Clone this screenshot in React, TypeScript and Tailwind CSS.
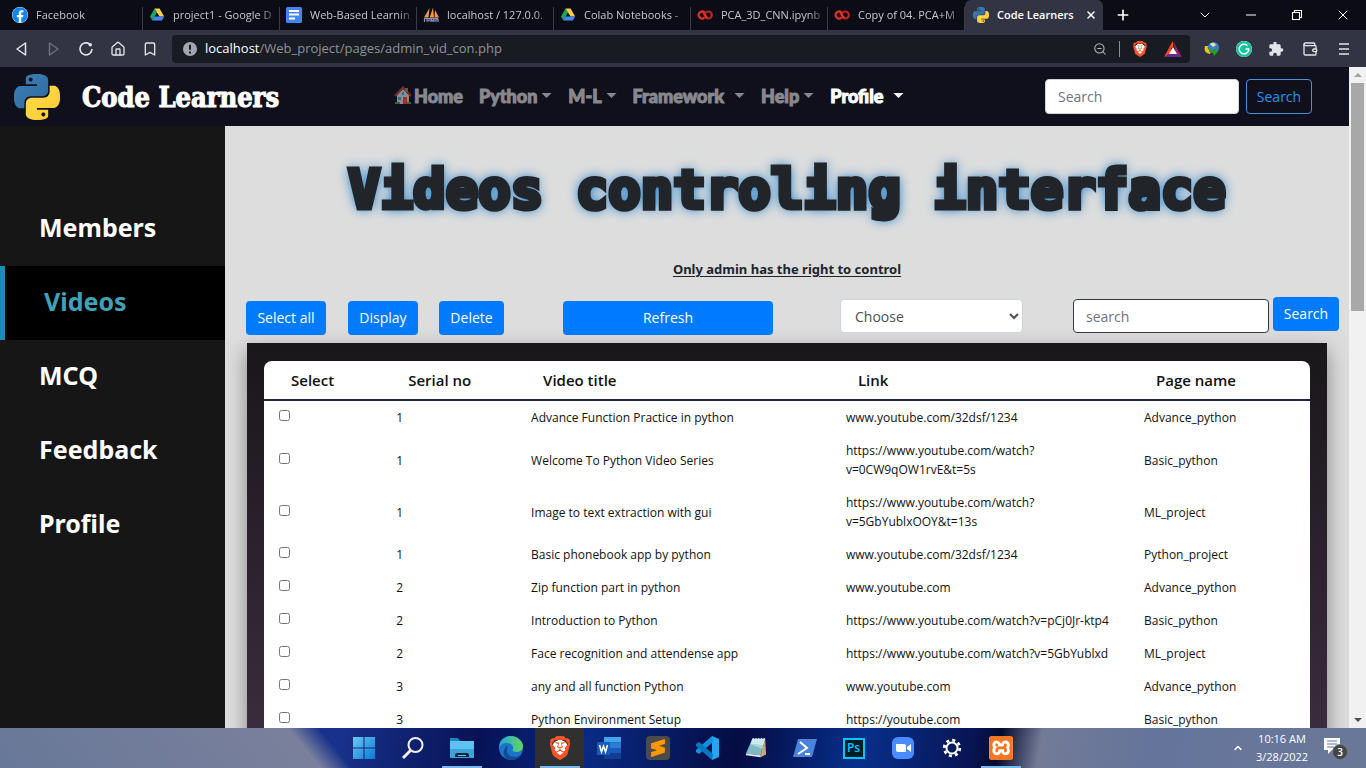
import React from "react";
import { SiBrave, SiXampp, SiSublimetext, SiGrammarly } from "react-icons/si";
import { FaFacebook } from "react-icons/fa";
import { MdExtension } from "react-icons/md";
import { Bookmark, ChevronDown, ChevronUp, House, Minus, Plus, Wallet, X, ZoomOut } from "lucide-react";

const sans = "font-['Open_Sans','Noto_Sans',sans-serif]";

function PythonLogo({ className }: { className: string }) {
  return (
    <svg viewBox="0 0 24 24" className={className} aria-hidden="true">
      <defs>
        <linearGradient id="pyBlue" x1="0" y1="0" x2="1" y2="1">
          <stop offset="0" stopColor="#3c82b8" />
          <stop offset="1" stopColor="#30699b" />
        </linearGradient>
        <linearGradient id="pyYellow" x1="0" y1="0" x2="1" y2="1">
          <stop offset="0" stopColor="#ffdf50" />
          <stop offset="1" stopColor="#ffc72f" />
        </linearGradient>
      </defs>
      <path
        fill="url(#pyBlue)"
        d="M14.25.18l.9.2.73.26.59.3.45.32.34.34.25.34.16.33.1.3.04.26.02.2-.01.13V8.5l-.05.63-.13.55-.21.46-.26.38-.3.31-.33.25-.35.19-.35.14-.33.1-.3.07-.26.04-.21.02H8.77l-.69.05-.59.14-.5.22-.41.27-.33.32-.27.35-.2.36-.15.37-.1.35-.07.32-.04.27-.02.21v3.06H3.17l-.21-.03-.28-.07-.32-.12-.35-.18-.36-.26-.36-.36-.35-.46-.32-.59-.28-.73-.21-.88-.14-1.05-.05-1.23.06-1.22.16-1.04.24-.87.32-.71.36-.57.4-.44.42-.33.42-.24.4-.16.36-.1.32-.05.24-.01h.16l.06.01h8.16v-.83H6.18l-.01-2.75-.02-.37.05-.34.11-.31.17-.28.25-.26.31-.23.38-.2.44-.18.51-.15.58-.12.64-.1.71-.06.77-.04.84-.02 1.27.05zm-6.3 1.98l-.23.33-.08.41.08.41.23.34.33.22.41.09.41-.09.33-.22.23-.34.08-.41-.08-.41-.23-.33-.33-.22-.41-.09-.41.09z"
      />
      <path
        fill="url(#pyYellow)"
        d="M21.04 6.11l.28.06.32.12.35.18.36.27.36.35.35.47.32.59.28.73.21.88.14 1.04.05 1.23-.06 1.23-.16 1.04-.24.86-.32.71-.36.57-.4.45-.42.33-.42.24-.4.16-.36.09-.32.05-.24.02-.16-.01h-8.22v.82h5.84l.01 2.76.02.36-.05.34-.11.31-.17.29-.25.25-.31.24-.38.2-.44.17-.51.15-.58.13-.64.09-.71.07-.77.04-.84.01-1.27-.04-1.07-.14-.9-.2-.73-.25-.59-.3-.45-.33-.34-.34-.25-.34-.16-.33-.1-.3-.04-.25-.02-.2.01-.13v-5.34l.05-.64.13-.54.21-.46.26-.38.3-.32.33-.24.35-.2.35-.14.33-.1.3-.06.26-.04.21-.02.13-.01h5.84l.69-.05.59-.14.5-.21.41-.28.33-.32.27-.35.2-.36.15-.36.1-.35.07-.32.04-.28.02-.21V6.07h2.09l.14.01zm-6.47 14.25l-.23.33-.08.41.08.41.23.33.33.23.41.08.41-.08.33-.23.23-.33.08-.41-.08-.41-.23-.33-.33-.23-.41-.08-.41.08z"
      />
    </svg>
  );
}

function DriveIcon() {
  return (
    <svg viewBox="0 0 16 16" className="size-4 shrink-0" aria-hidden="true">
      <path d="M5.5 1.5 1 9.5l2.3 4L8 5.500z" fill="#1ea362" />
      <path d="M5.500 1.500h5l4.700 8h-4.700z" fill="#ffcf48" />
      <path d="M5.500 9.500h9.700l-2.300 4H3.300z" fill="#4687f4" />
    </svg>
  );
}

function DocsIcon() {
  return (
    <svg viewBox="0 0 16 16" className="size-4 shrink-0" aria-hidden="true">
      <rect width="16" height="16" rx="1.500" fill="#4285f4" />
      <path d="M3 4h10M3 7.500h10M3 11.500h6" stroke="#fff" strokeWidth="1.800" />
    </svg>
  );
}

function SailIcon() {
  return (
    <svg viewBox="0 0 16 16" className="size-4 shrink-0" aria-hidden="true">
      <path d="M1 10.500 6.500 1 5.500 10.500zM6.700 10.500 10 .5l1 10zM11.500 10.500 12 3l4 7.500z" fill="#f09a3c" />
      <path d="M1 11.500h14M1.500 15v-3.500M4 12v2h2v-2M8 15v-3l1.500 2 1.500-2v3M13 15v-3h2v3" fill="none" stroke="#8f93b8" strokeWidth="1.200" />
    </svg>
  );
}

function ColabIcon() {
  return (
    <svg viewBox="0 0 16 16" className="size-4 shrink-0" fill="none" strokeWidth="2.200" aria-hidden="true">
      <path d="M7.500 5.300a3.500 3.500 0 1 0 0 5.400" stroke="#e0332c" />
      <circle cx="11.300" cy="8" r="3.500" stroke="#c4211c" />
      <path d="M6 5l4 6" stroke="#e0332c" />
    </svg>
  );
}

function BraveIcon({ className }: { className: string }) {
  return (
    <span className="flex items-center justify-center bg-[radial-gradient(circle,#fff_45%,transparent_48%)]">
      <SiBrave className={className} />
    </span>
  );
}

const tabs = [
  { icon: <FaFacebook className="size-4 shrink-0 rounded-full bg-white text-[#1185f3]" />, title: "Facebook" },
  { icon: <DriveIcon />, title: "project1 - Google D" },
  { icon: <DocsIcon />, title: "Web-Based Learnin" },
  { icon: <SailIcon />, title: "localhost / 127.0.0." },
  { icon: <DriveIcon />, title: "Colab Notebooks -" },
  { icon: <ColabIcon />, title: "PCA_3D_CNN.ipynb" },
  { icon: <ColabIcon />, title: "Copy of 04. PCA+M" },
];

function TabStrip() {
  return (
    <div className="flex h-[30px] shrink-0 items-stretch bg-[#0c0c16] pl-1.5 text-[11px] text-[#c6c7cc]">
      {tabs.map((tab) => (
        <div key={tab.title} className="flex w-[137px] min-w-0 items-end">
          <div className="flex h-[23px] min-w-0 flex-1 items-center gap-2 border-r border-[#3b3c44] pb-[7px] pl-1.5">
            {tab.icon}
            <span className="min-w-0 flex-1 whitespace-nowrap [mask-image:linear-gradient(to_right,#000_82%,transparent)]">
              {tab.title}
            </span>
          </div>
        </div>
      ))}
      <div className="flex w-[138px] items-center gap-2 rounded-t-md bg-[#323443] pl-2 pr-1.5 font-semibold text-white">
        <PythonLogo className="size-4 shrink-0" />
        <span className="flex-1 whitespace-nowrap">Code Learners</span>
        <button aria-label="Close tab"><X className="size-3" strokeWidth={3} /></button>
      </div>
      <button aria-label="New tab" className="px-3 text-white"><Plus className="size-4" strokeWidth={2.500} /></button>
      <div className="ml-auto flex text-white">
        <button aria-label="Search tabs" className="flex w-[46px] items-center justify-center"><ChevronDown className="size-4" strokeWidth={1.500} /></button>
        <button aria-label="Minimize" className="flex w-[46px] items-center justify-center"><Minus className="size-4" strokeWidth={1.500} /></button>
        <button aria-label="Restore" className="flex w-[46px] items-center justify-center">
          <svg viewBox="0 0 12 12" className="size-3" fill="none" stroke="currentColor" strokeWidth="1.100"><path d="M1.500 3.500h7v7h-7zM3.500 3.500v-2h7v7h-2" /></svg>
        </button>
        <button aria-label="Close" className="flex w-[46px] items-center justify-center"><X className="size-4" strokeWidth={1.500} /></button>
      </div>
    </div>
  );
}

const toolButton = "flex w-8 items-center justify-center";

function Toolbar() {
  return (
    <div className="flex h-[37px] shrink-0 items-center bg-[#323443] pl-1.5 text-[#e3e4e8]">
      <button aria-label="Back" className={toolButton}>
        <svg viewBox="0 0 16 16" className="size-4" fill="none" stroke="currentColor" strokeWidth="1.500" strokeLinejoin="round"><path d="M11.500 2v12L3 8z" /></svg>
      </button>
      <button aria-label="Forward" className={toolButton + " text-[#6d6f7a]"}>
        <svg viewBox="0 0 16 16" className="size-4" fill="none" stroke="currentColor" strokeWidth="1.500" strokeLinejoin="round"><path d="M3.500 2v12L12 8z" /></svg>
      </button>
      <button aria-label="Reload" className={toolButton}>
        <svg viewBox="0 0 16 16" className="size-4" fill="none" stroke="currentColor" strokeWidth="1.600"><path d="M11.500 3A6 6 0 1 0 14 8" /><circle cx="12.300" cy="3.700" r="1.800" fill="currentColor" stroke="none" /></svg>
      </button>
      <button aria-label="Home" className={toolButton}><House className="size-4" /></button>
      <button aria-label="Bookmark" className={toolButton}><Bookmark className="size-4" /></button>
      <div className="ml-1.5 flex h-7 min-w-0 flex-1 items-center rounded bg-[#181b22] pl-[11px] pr-2">
        <svg viewBox="0 0 14 14" className="size-3.5 shrink-0"><circle cx="7" cy="7" r="7" fill="#a3a6b0" /><path d="M7 2.800v5M7 9.400v2" stroke="#181b22" strokeWidth="2" /></svg>
        <span className="ml-2 flex-1 text-[13px] text-[#8f929a]"><span className="text-white">localhost</span>/Web_project/pages/admin_vid_con.php</span>
        <ZoomOut className="size-3.5 text-[#b5b7be]" strokeWidth={1.800} />
        <span className="mx-3 h-4 w-px bg-[#8b8d96]" />
        <BraveIcon className="size-4 text-[#fb542b]" />
        <svg viewBox="0 0 18 16" className="ml-4 h-4 w-[18px]">
          <path d="M9 0 4.500 8 9 6z" fill="#ff4724" /><path d="M9 0 0 16l6-3z" fill="#ff4724" /><path d="m9 0 9 16-6-3z" fill="#9e1f63" /><path d="M0 16h18l-6-4H6z" fill="#662d91" /><path d="m9 6 4 7H5z" fill="#fff" />
        </svg>
      </div>
      <div className="flex items-center">
        <span className="flex w-11 justify-center">
          <svg viewBox="0 0 16 16" className="size-4"><circle cx="9.500" cy="6.500" r="5.500" fill="#3b7fc4" /><path d="M6 3q4-3 6 1l-3 2z" fill="#dce9a8" /><path d="M1 5q-2 7 5 8l1-3Q3 9 4 5z" fill="#f2c21b" /><path d="m6 8 9 1-5 6-1-3-4-1z" fill="#2a9b25" /></svg>
        </span>
        <span className="flex w-5 justify-center"><SiGrammarly className="size-4 rounded-full bg-white text-[#15c39a]" /></span>
        <span className="flex w-11 justify-center"><MdExtension className="size-4" /></span>
        <span className="flex w-6 justify-center"><Wallet className="size-4" /></span>
        <button aria-label="Menu" className="flex w-11 justify-center">
          <svg viewBox="0 0 12 12" className="size-3" stroke="currentColor" strokeWidth="1.500"><path d="M1 1h10M1 6h10M1 11h10" /></svg>
        </button>
      </div>
    </div>
  );
}

function Caret() {
  return <svg viewBox="0 0 10 5" className="h-[5px] w-[11px]" fill="currentColor" aria-hidden="true"><path d="M0 0h10L5 5z" /></svg>;
}

function HouseEmoji() {
  return (
    <svg viewBox="0 0 18 19" className="h-[19px] w-[18px]" aria-hidden="true">
      <path d="M3 9v9h12V9L9 3z" fill="#8a8a90" />
      <path d="M1 10 9 1.500 17 10" fill="none" stroke="#7c2d2a" strokeWidth="2" />
      <path d="M11 2h3v4h-3z" fill="#75504a" />
      <path d="M4 11h3v3H4zM8 6h2v3H8z" fill="#1f7591" />
      <path d="M9 11h4v7H9z" fill="#9a3029" />
      <path d="M1 16h5v2H1zM13 16h4v2h-4z" fill="#2d6940" />
    </svg>
  );
}

function SiteNav() {
  const link = "flex items-center";
  return (
    <nav className="flex h-[59px] shrink-0 items-center bg-[#10101c] pl-3.5 pr-[37px]">
      <PythonLogo className="size-[46px] shrink-0" />
      <a href="#home" className="ml-[22px] w-[312px] whitespace-nowrap pt-1 font-['DejaVu_Serif_Condensed','DejaVu_Serif',serif] text-[27px] font-bold text-white [-webkit-text-stroke:1px_#fff]">Code Learners</a>
      <div className="flex flex-1 items-center gap-4 whitespace-nowrap pb-0.5 font-['Lato',sans-serif] text-[18px] font-black leading-6 text-[#88888e] [-webkit-text-stroke:1px_currentColor]">
        <a href="#home" className={link + " gap-0.5"}><HouseEmoji />Home</a>
        <a href="#python" className={link + " gap-1"}>Python<Caret /></a>
        <a href="#ml" className={link + " gap-1"}>M-L<Caret /></a>
        <a href="#framework" className={link + " gap-2.5"}>Framework<Caret /></a>
        <a href="#help" className={link + " gap-1"}>Help<Caret /></a>
        <a href="#profile" className={link + " gap-2.5 text-white"}>Profile<Caret /></a>
      </div>
      <form className="flex gap-[7px] text-sm">
        <input aria-label="Search site" placeholder="Search" className="h-[35px] w-[194px] rounded border border-[#ced4da] bg-white px-3 placeholder:text-[#6c757d]" />
        <button type="button" className="h-[35px] w-[66px] rounded border border-[#4a90d9] text-[#2196f3]">Search</button>
      </form>
    </nav>
  );
}

function Sidebar() {
  const item = "flex h-[74px] items-center pb-0.5 pl-[39px] text-white";
  return (
    <aside className="w-[225px] shrink-0 bg-[#161616] pt-[66px] font-['Noto_Sans',sans-serif] text-[25px] font-bold">
      <a href="#members" className={item}>Members</a>
      <a href="#videos" aria-current="page" className="flex h-[74px] items-center border-l-[5px] border-[#1f8bb0] bg-black pb-0.5 pl-[39px] text-[#3fa2b8]">Videos</a>
      <a href="#mcq" className={item}>MCQ</a>
      <a href="#feedback" className={item}>Feedback</a>
      <a href="#account" className={item}>Profile</a>
    </aside>
  );
}

const videos = [
  ["1", "Advance Function Practice in python", "www.youtube.com/32dsf/1234", "Advance_python"],
  ["1", "Welcome To Python Video Series", "https://www.youtube.com/watch?v=0CW9qOW1rvE&t=5s", "Basic_python"],
  ["1", "Image to text extraction with gui", "https://www.youtube.com/watch?v=5GbYublxOOY&t=13s", "ML_project"],
  ["1", "Basic phonebook app by python", "www.youtube.com/32dsf/1234", "Python_project"],
  ["2", "Zip function part in python", "www.youtube.com", "Advance_python"],
  ["2", "Introduction to Python", "https://www.youtube.com/watch?v=pCj0Jr-ktp4", "Basic_python"],
  ["2", "Face recognition and attendense app", "https://www.youtube.com/watch?v=5GbYublxd", "ML_project"],
  ["3", "any and all function Python", "www.youtube.com", "Advance_python"],
  ["3", "Python Environment Setup", "https://youtube.com", "Basic_python"],
];

function LinkText({ url }: { url: string }) {
  const cut = url.indexOf("?") + 1;
  if (cut === 0 || url.length < 46) return <>{url}</>;
  return <>{url.slice(0, cut)}<wbr />{url.slice(cut)}</>;
}

function VideoTable() {
  const head = "pl-[27px] text-left font-semibold";
  const cell = "py-[7px] pl-[15px] align-middle";
  return (
    <div className="ml-[22px] mr-[22px] bg-linear-to-b from-[#19171a] to-[#3b2b3e] to-[385px] px-[17px] pb-4 pt-[18px] shadow-[0_8px_20px_rgba(0,0,0,0.4)]">
      <div className="overflow-hidden rounded-t-lg bg-white">
        <table className="w-full table-fixed border-collapse text-xs leading-[19px] text-[#111]">
          <colgroup>
            <col className="w-[11.200%]" />
            <col className="w-[12.900%]" />
            <col className="w-[30.100%]" />
            <col className="w-[28.500%]" />
            <col />
          </colgroup>
          <thead>
            <tr className="h-[39px] border-b-2 border-[#232350] text-[15px]">
              <th className={head}>Select</th>
              <th className={head}>Serial no</th>
              <th className={head}>Video title</th>
              <th className={head}>Link</th>
              <th className={head}>Page name</th>
            </tr>
          </thead>
          <tbody>
            {videos.map((v, i) => (
              <tr key={i}>
                <td className={cell}><input type="checkbox" aria-label={"Select " + v[1]} className="mb-1 block size-[11px]" /></td>
                <td className={cell}>{v[0]}</td>
                <td className={cell}>{v[1]}</td>
                <td className={cell}><LinkText url={v[2]} /></td>
                <td className={cell}>{v[3]}</td>
              </tr>
            ))}
          </tbody>
        </table>
      </div>
    </div>
  );
}

function Main() {
  const button = "h-[34px] rounded bg-[#007bff] text-white";
  return (
    <main className="min-w-0 flex-1 overflow-hidden bg-[#dddddd] text-[#212529]">
      <h1 className="mt-[30px] whitespace-nowrap text-center font-['DejaVu_Sans_Mono',monospace] text-[54px] font-bold leading-[68px] [-webkit-text-stroke:5px_#212529] [text-shadow:0_0_14px_#2f86cc,0_0_10px_#2f86cc]">
        Videos controling interface
      </h1>
      <p className="mt-[35px] text-center font-['Noto_Sans',sans-serif] text-[13px] font-bold leading-5 underline underline-offset-2">Only admin has the right to control</p>
      <form className="mt-[18px] flex h-[46px] items-start pl-[21px] pr-2.5 text-sm">
        <div className="flex flex-1 pt-1">
          <button type="button" className={button + " mr-[22px] w-20"}>Select all</button>
          <button type="button" className={button + " mr-[21px] w-[70px]"}>Display</button>
          <button type="button" className={button + " mr-[59px] w-[65px]"}>Delete</button>
          <button type="button" className={button + " w-[210px]"}>Refresh</button>
        </div>
        <div className="flex items-center gap-[50px] pt-0.5">
          <select aria-label="Page" className="h-[34px] w-[183px] rounded border border-[#ced4da] bg-white pl-2.5 text-[#495057]">
            <option>Choose</option>
          </select>
          <input aria-label="Search videos" placeholder="search" className="h-[34px] w-[196px] rounded border border-[#343a40] bg-white px-3 placeholder:text-[#6c757d]" />
        </div>
        <button type="button" className={button + " ml-1 w-[66px]"}>Search</button>
      </form>
      <VideoTable />
    </main>
  );
}

function PageScrollbar() {
  return (
    <div className="flex w-[17px] shrink-0 flex-col items-center justify-between bg-[#f1f1f1] pb-1.5 pt-1.5">
      <div className="flex w-full flex-col items-center gap-1.5">
        <svg viewBox="0 0 8 4" className="h-1 w-2"><path d="M0 4h8L4 0z" fill="#a3a3a3" /></svg>
        <div className="h-[228px] w-[13px] bg-[#a8a8a8]" />
      </div>
      <svg viewBox="0 0 8 4" className="h-1 w-2"><path d="M0 0h8L4 4z" fill="#505050" /></svg>
    </div>
  );
}

const apps = [
  { name: "Start", bar: "", icon: (
    <svg viewBox="0 0 24 24" className="size-[22px]"><defs><linearGradient id="win" x1="0" y1="0" x2="1" y2="1"><stop stopColor="#6cc9f5" /><stop offset="1" stopColor="#0a78d4" /></linearGradient></defs><path d="M0 0h11.400v11.400H0zM12.600 0H24v11.400H12.600zM0 12.600h11.400V24H0zM12.600 12.600H24V24H12.600z" fill="url(#win)" /></svg>) },
  { name: "Search", bar: "", icon: (
    <svg viewBox="0 0 24 24" className="size-6" fill="none" stroke="#eee" strokeWidth="2"><circle cx="14.500" cy="9" r="7" /><path d="M9.500 14.500 2 22" strokeWidth="3" /></svg>) },
  { name: "File Explorer", bar: "bg-[#76b9ed]", icon: (
    <svg viewBox="0 0 24 22" className="h-[22px] w-6"><path d="M0 1h8l2 3h14v6H0z" fill="#1687c9" /><path d="M0 4h24v17H0z" fill="#5cc3f0" /><path d="M0 12h24v9H0z" fill="#3fa3da" /><path d="M5 20v-2q0-2 2-2h10q2 0 2 2v2z" fill="#10293b" /><path d="M8 18.500h8" stroke="#79bfe8" /></svg>) },
  { name: "Edge", bar: "", icon: (
    <svg viewBox="0 0 24 24" className="size-6"><defs><linearGradient id="edgeTop" x1="0" y1="0" x2="1" y2="0"><stop stopColor="#20a5e0" /><stop offset="1" stopColor="#62d75b" /></linearGradient></defs><circle cx="12" cy="12" r="12" fill="#1b74c8" /><path d="M0 12C0 4 6 0 12 0s12 5 12 10c0 4-3 6-7 6-3 0-4-1-3-3 1-4-3-6-6-6-4 0-7 2-8 5z" fill="url(#edgeTop)" /><path d="M8 14c0 6 6 9 14 5-3 5-9 6-14 4-5-3-4-11 1-14q-1 2-1 5z" fill="#124b93" /></svg>) },
  { name: "Brave", bar: "bg-[#76b9ed]", icon: <BraveIcon className="size-6 text-[#fb542b]" /> },
  { name: "Word", bar: "", icon: (
    <svg viewBox="0 0 24 22" className="h-[22px] w-6"><path d="M7 0h17v5.500H7z" fill="#41a5ee" /><path d="M7 5.500h17V11H7z" fill="#2b7cd3" /><path d="M7 11h17v5.500H7z" fill="#185abd" /><path d="M7 16.500h17V22H7z" fill="#103f91" /><rect y="5" width="13" height="13" rx="1" fill="#185abd" /><path d="m2.500 8 2 7 2-6 2 6 2-7" fill="none" stroke="#fff" strokeWidth="1.500" /></svg>) },
  { name: "Sublime Text", bar: "", icon: <span className="flex size-6 items-center justify-center rounded-sm bg-[#4b4b4b]"><SiSublimetext className="size-[18px] text-[#ff9800]" /></span> },
  { name: "Visual Studio Code", bar: "", icon: (
    <svg viewBox="0 0 24 24" className="size-6"><path d="m17 0 7 3v18l-7 3z" fill="#23a7f2" /><path d="m17 0 1 6L4 18l-3-2v-2z" fill="#1590dd" /><path d="m17 24 1-6L4 6 1 8v2z" fill="#0877c2" /></svg>) },
  { name: "Notepad", bar: "", icon: (
    <svg viewBox="0 0 24 24" className="size-[22px]"><path d="M8 2h14l-5 18L1 18z" fill="#7fb9c6" /><path d="M8 2h14l-2 7-14-1z" fill="#cfe8ec" /><path d="m6 8 14 1-1 4z" fill="#a9d4dc" /><path d="m22 2 1 17-6 3v-2z" fill="#c9a877" /><path d="m1 18 16 2v2L1 20z" fill="#e4e9ea" /><path d="M9 1v2M12 1v2M15 1v2M18 1v2M21 1v2" stroke="#eee" /></svg>) },
  { name: "PowerShell", bar: "", icon: (
    <svg viewBox="0 0 24 20" className="h-5 w-6"><path d="M5 1h19l-5 18H0z" fill="#4a83dc" /><path d="m7 4 7 6-9 6M12 16h5" fill="none" stroke="#fff" strokeWidth="2" /></svg>) },
  { name: "Photoshop", bar: "", icon: <span className="flex h-[21px] w-[22px] items-center justify-center border-2 border-[#00c8ff] bg-[#001d26] text-xs font-semibold leading-4 text-[#00c8ff]">Ps</span> },
  { name: "Zoom", bar: "", icon: (
    <svg viewBox="0 0 24 24" className="size-6"><rect x="1" y="1" width="22" height="22" rx="6" fill="#4a8cff" /><path d="M5 8h8q2 0 2 2v6H7q-2 0-2-2zM16 11l4-3v8l-4-3z" fill="#fff" /></svg>) },
  { name: "Settings", bar: "", icon: (
    <svg viewBox="0 0 24 24" className="size-[22px]" fill="none" stroke="#fff"><circle cx="12" cy="12" r="6" strokeWidth="2.200" /><circle cx="12" cy="12" r="8.500" strokeWidth="3" strokeDasharray="3.300 3.376" /></svg>) },
  { name: "XAMPP", bar: "bg-[#76b9ed]", icon: <span className="flex size-6 items-center justify-center rounded-sm bg-white"><SiXampp className="size-6 text-[#f37623]" /></span> },
];

function Taskbar() {
  return (
    <footer className="flex h-10 shrink-0 items-stretch bg-[linear-gradient(50deg,#687898_0,#7a809c_246px,transparent_270px),linear-gradient(100deg,#18318a_0%,#18318a_25%,#071254_35%,#0a2a84_43%,#050c42_54%,#07308c_63%,#081554_71%,#050b30_73%,#737b96_76%,#65749b_84%,#6a7898_100%)] text-white">
      <div className="flex flex-1 justify-center pr-2.5">
        {apps.map((app) => (
          <button
            key={app.name}
            aria-label={app.name}
            className={app.name === "Brave" ? "flex w-[49px] flex-col items-center bg-[#303030]" : "flex w-[49px] flex-col items-center"}
          >
            <span className="flex flex-1 items-center justify-center">{app.icon}</span>
            <span className={"-mt-0.5 h-0.5 w-10 " + app.bar} />
          </button>
        ))}
      </div>
      <div className="-ml-[142px] flex items-center pr-3.5">
        <ChevronUp className="size-3" strokeWidth={3} />
        <div className="ml-3 w-[52px] whitespace-nowrap text-center text-[11px] leading-[18px]">
          <div>10:16 AM</div>
          <div>3/28/2022</div>
        </div>
        <div className="relative ml-4 h-6 w-7">
          <svg viewBox="0 0 16 16" className="mt-0.5 size-4"><path d="M0 0h16v12H8l-4 4v-4H0z" fill="#fff" /><path d="M3 3h10M3 6h10M3 9h7" stroke="#65749b" /></svg>
          <span className="absolute left-2 top-2 flex size-4 items-center justify-center rounded-full border border-[#777] bg-[#41454e] text-[10px] font-semibold leading-none">3</span>
        </div>
      </div>
    </footer>
  );
}

export default function App() {
  return (
    <div className={"flex h-screen flex-col overflow-hidden " + sans}>
      <TabStrip />
      <Toolbar />
      <div className="flex min-h-0 flex-1">
        <div className="flex min-w-0 flex-1 flex-col">
          <SiteNav />
          <div className="flex min-h-0 flex-1">
            <Sidebar />
            <Main />
          </div>
        </div>
        <PageScrollbar />
      </div>
      <Taskbar />
    </div>
  );
}
